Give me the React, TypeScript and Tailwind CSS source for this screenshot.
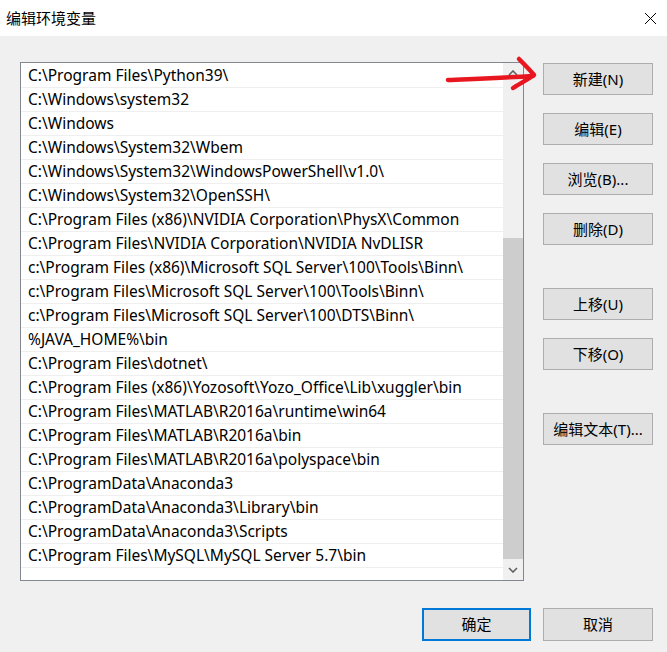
import React from 'react';

const paths = [
  'C:\\Program Files\\Python39\\',
  'C:\\Windows\\system32',
  'C:\\Windows',
  'C:\\Windows\\System32\\Wbem',
  'C:\\Windows\\System32\\WindowsPowerShell\\v1.0\\',
  'C:\\Windows\\System32\\OpenSSH\\',
  'C:\\Program Files (x86)\\NVIDIA Corporation\\PhysX\\Common',
  'C:\\Program Files\\NVIDIA Corporation\\NVIDIA NvDLISR',
  'c:\\Program Files (x86)\\Microsoft SQL Server\\100\\Tools\\Binn\\',
  'c:\\Program Files\\Microsoft SQL Server\\100\\Tools\\Binn\\',
  'c:\\Program Files\\Microsoft SQL Server\\100\\DTS\\Binn\\',
  '%JAVA_HOME%\\bin',
  'C:\\Program Files\\dotnet\\',
  'C:\\Program Files (x86)\\Yozosoft\\Yozo_Office\\Lib\\xuggler\\bin',
  'C:\\Program Files\\MATLAB\\R2016a\\runtime\\win64',
  'C:\\Program Files\\MATLAB\\R2016a\\bin',
  'C:\\Program Files\\MATLAB\\R2016a\\polyspace\\bin',
  'C:\\ProgramData\\Anaconda3',
  'C:\\ProgramData\\Anaconda3\\Library\\bin',
  'C:\\ProgramData\\Anaconda3\\Scripts',
  'C:\\Program Files\\MySQL\\MySQL Server 5.7\\bin',
];

const font = "font-['Noto_Sans','Noto_Sans_CJK_SC',sans-serif]";

const SideButton: React.FC<{ label: string; className?: string }> = ({ label, className = '' }) => (
  <button
    className={`w-[110px] h-[32px] bg-[#e1e1e1] border border-[#adadad] text-[15px] text-black flex items-center justify-center ${className}`}
  >
    {label}
  </button>
);

const Chevron: React.FC<{ down?: boolean }> = ({ down }) => (
  <svg width="10" height="6" viewBox="0 0 10 6">
    <polyline
      points={down ? '1,1 5,5 9,1' : '1,5 5,1 9,5'}
      fill="none"
      stroke="#606060"
      strokeWidth="1.6"
    />
  </svg>
);

const App: React.FC = () => {
  return (
    <div className={`relative w-[667px] h-[652px] bg-[#f0f0f0] overflow-hidden ${font}`}>
      {/* Title bar */}
      <div className="h-[36px] bg-white flex items-center justify-between pl-[6px] pr-[10px]">
        <span className="text-[15px] text-black leading-none">编辑环境变量</span>
        <svg width="13" height="13" viewBox="0 0 13 13">
          <path d="M1 1 L12 12 M12 1 L1 12" stroke="#000" strokeWidth="1" />
        </svg>
      </div>

      <div className="flex pt-[26px] pl-[20px]">
        {/* Path list */}
        <div className="w-[504px] h-[519px] border border-[#828790] bg-white flex">
          <div className="flex-1 pt-px">
            {paths.map(p => (
              <div key={p} className="h-[24px] flex items-center pl-[7px] pt-px border-b border-[#efefef] text-[15.5px] text-black whitespace-nowrap">
                {p}
              </div>
            ))}
          </div>
          {/* Scrollbar */}
          <div className="w-[20px] bg-[#f0f0f0] flex flex-col">
            <div className="h-[20px] flex items-center justify-center">
              <Chevron />
            </div>
            <div className="h-[155px]" />
            <div className="h-[321px] bg-[#cdcdcd]" />
            <div className="h-[21px] flex items-center justify-center">
              <Chevron down />
            </div>
          </div>
        </div>

        {/* Action buttons */}
        <div className="ml-[19px] pt-px flex flex-col">
          <SideButton label="新建(N)" />
          <SideButton label="编辑(E)" className="mt-[18px]" />
          <SideButton label="浏览(B)..." className="mt-[18px]" />
          <SideButton label="删除(D)" className="mt-[18px]" />
          <SideButton label="上移(U)" className="mt-[43px]" />
          <SideButton label="下移(O)" className="mt-[18px]" />
          <SideButton label="编辑文本(T)..." className="mt-[43px]" />
        </div>
      </div>

      {/* Dialog footer */}
      <div className="flex justify-end gap-[12px] pr-[14px] mt-[27px]">
        <button className="w-[109px] h-[33px] bg-[#e1e1e1] border-2 border-[#0078d7] text-[15px] text-black">确定</button>
        <button className="w-[110px] h-[33px] bg-[#e1e1e1] border border-[#adadad] text-[15px] text-black">取消</button>
      </div>

      {/* Red marker arrow */}
      <svg className="absolute left-0 top-0 pointer-events-none" width="667" height="652" viewBox="0 0 667 652">
        <g fill="none" stroke="#e8161f" strokeWidth="4.5" strokeLinecap="round" strokeLinejoin="round">
          <path d="M448 80 C470 79 500 78 533 76" />
          <path d="M519 59 C525 65 530 70 534 75 C527 80 519 84 513 88" />
        </g>
      </svg>
    </div>
  );
};

export default App;
